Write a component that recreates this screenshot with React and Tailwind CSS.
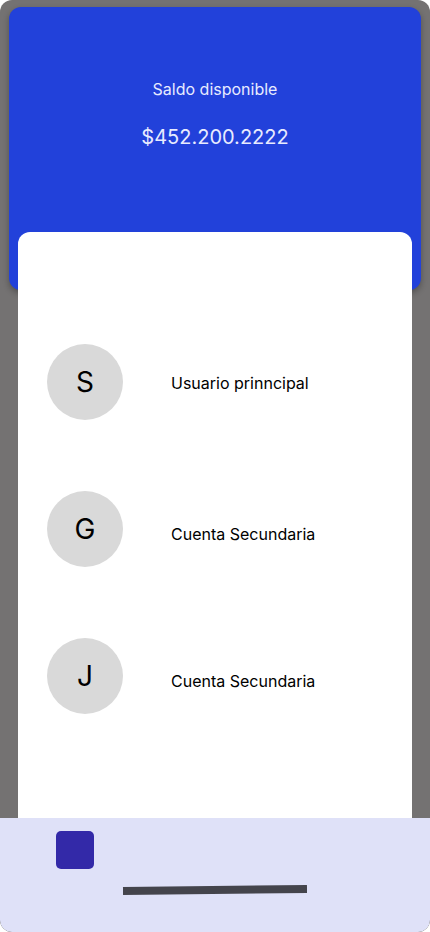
const cuentas = [
  { letra: "S", nombre: "Usuario prinncipal", baja: "mt-[2px]" },
  { letra: "G", nombre: "Cuenta Secundaria", baja: "mt-[9px]" },
  { letra: "J", nombre: "Cuenta Secundaria", baja: "mt-[9px]" },
];

const App = () => {
  return (
    <div className="w-[430px] h-[932px] flex flex-col bg-[#747272] rounded-[12px] overflow-hidden font-['Inter',sans-serif]">
      {/* saldo */}
      <div className="mt-[7px] mx-[9px] h-[283px] shrink-0 rounded-[12px] bg-[#2241da] shadow-[0_3px_6px_rgba(0,0,0,0.3)] flex flex-col items-center pt-[72px] text-[#e8ebff]">
        <p className="text-[16px] leading-[20px]">Saldo disponible</p>
        <p className="mt-[26px] text-[20px] leading-[24px]">$452.200.2222</p>
      </div>

      {/* cuentas */}
      <div className="relative -mt-[58px] mx-[18px] h-[586px] shrink-0 bg-white rounded-t-[12px] pt-[112px] pl-[29px] flex flex-col gap-[71px]">
        {cuentas.map((c, i) => (
          <div key={i} className="flex items-center">
            <div className="w-[76px] h-[76px] rounded-full bg-[#d9d9d9] flex items-center justify-center text-[28px] text-black">
              {c.letra}
            </div>
            <span className={`ml-[48px] text-[16px] text-black ${c.baja}`}>{c.nombre}</span>
          </div>
        ))}
      </div>

      {/* barra inferior */}
      <div className="flex-1 bg-[#dfe1f8] rounded-b-[12px] pt-[13px]">
        <div className="ml-[56px] w-[38px] h-[38px] rounded-[5px] bg-[#3329a8]"></div>
        <div className="ml-[123px] mt-[17px] w-[184px] h-[8px] bg-[#44444c] -rotate-[0.6deg]"></div>
      </div>
    </div>
  )
}

export default App
